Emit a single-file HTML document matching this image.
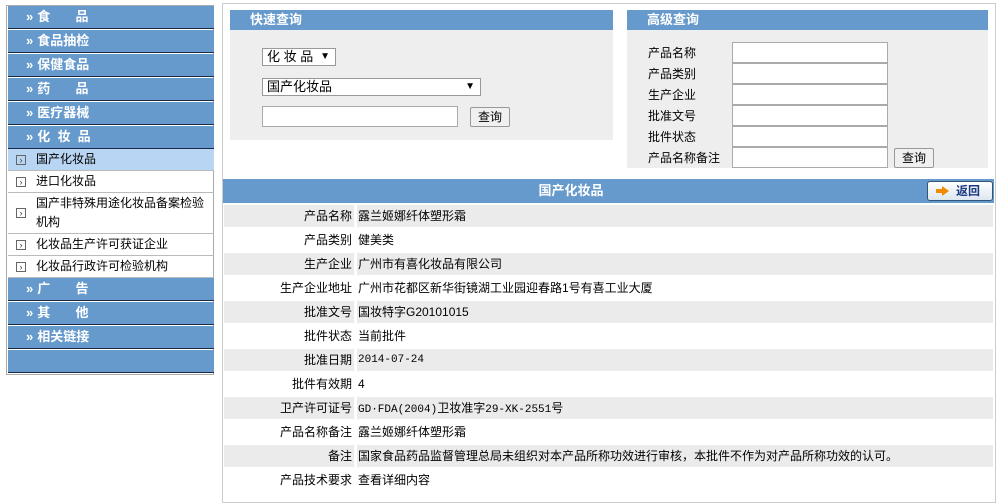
<!DOCTYPE html>
<html><head><meta charset="utf-8"><style>
*{margin:0;padding:0;box-sizing:border-box}
body{width:998px;height:498px;background:#fff;position:relative;overflow:hidden;font-family:"Liberation Sans","Noto Sans CJK SC",sans-serif;font-size:12px;color:#000}
.a{position:absolute}
.menu{left:6px;top:5px;width:208px;height:370px;border:1px solid #aaa;background:#fff}
.h{position:absolute;left:1px;width:206px;height:23px;background:#6699cc;border-bottom:1px solid #1a2a44;color:#fff;font-weight:bold;font-size:13px;line-height:22px;padding-left:18px}
.h.x:before{content:"»";margin-right:4px}
.it{position:absolute;left:1px;width:206px;border-bottom:1px solid #bbb;line-height:21px;padding-left:28px;font-size:12px}
.it i{position:absolute;left:8px;top:50%;margin-top:-5px;width:10px;height:10px;border:1px solid #666;font-style:normal;font-size:9px;line-height:8px;text-align:center;color:#444}
.ph{background:#6699cc;color:#fff;font-weight:bold;font-size:13px;line-height:20px;height:20px;padding-left:20px}
.pb{background:#eeeeee}
.sel{position:absolute;background:#fff;border:1px solid #999;height:18px;line-height:16px;padding-left:4px;font-size:13px}
.sel b{position:absolute;right:5px;top:0;font-size:10px}
.inp{position:absolute;background:#fff;border:1px solid #aaa}
.btn{position:absolute;background:#f0f0f0;border:1px solid #999;border-radius:2px;text-align:center;line-height:18px;font-size:12px}
.lbl{position:absolute;left:648px;font-size:12px}
.row{position:absolute;left:224px;width:769px;height:22px;line-height:22px}
.row .l{position:absolute;left:0;width:130px;height:22px;text-align:right;padding-right:2px}
.row .v{position:absolute;left:133px;right:0;height:22px;padding-left:1px}
.g .l,.g .v{background:#ebebeb}
</style></head><body>
<div class="a menu">
<div class="h x" style="top:0">食&nbsp;&nbsp;&nbsp;&nbsp;&nbsp;&nbsp;&nbsp;品</div>
<div class="h x" style="top:24px">食品抽检</div>
<div class="h x" style="top:48px">保健食品</div>
<div class="h x" style="top:72px">药&nbsp;&nbsp;&nbsp;&nbsp;&nbsp;&nbsp;&nbsp;品</div>
<div class="h x" style="top:96px">医疗器械</div>
<div class="h x" style="top:120px">化&nbsp;&nbsp;妆&nbsp;&nbsp;品</div>
<div class="it" style="top:143px;height:22px;background:#b8d6f4"><i>›</i>国产化妆品</div>
<div class="it" style="top:165px;height:22px"><i>›</i>进口化妆品</div>
<div class="it" style="top:187px;height:41px;line-height:19px;padding-top:1px"><i>›</i>国产非特殊用途化妆品备案检验机构</div>
<div class="it" style="top:228px;height:22px"><i>›</i>化妆品生产许可获证企业</div>
<div class="it" style="top:250px;height:22px"><i>›</i>化妆品行政许可检验机构</div>
<div class="h x" style="top:272px">广&nbsp;&nbsp;&nbsp;&nbsp;&nbsp;&nbsp;&nbsp;告</div>
<div class="h x" style="top:296px">其&nbsp;&nbsp;&nbsp;&nbsp;&nbsp;&nbsp;&nbsp;他</div>
<div class="h x" style="top:320px">相关链接</div>
<div class="h" style="top:344px;padding:0"></div>
</div>
<div class="a" style="left:222px;top:3px;width:774px;height:500px;border:1px solid #ccc"></div>
<div class="a" style="left:230px;top:10px;width:383px">
<div class="ph">快速查询</div>
<div class="pb" style="height:110px;position:relative">
<div class="sel" style="left:32px;top:18px;width:74px">化 妆 品<b>▼</b></div>
<div class="sel" style="left:32px;top:48px;width:219px">国产化妆品<b>▼</b></div>
<div class="inp" style="left:32px;top:76px;width:196px;height:21px"></div>
<div class="btn" style="left:240px;top:77px;width:40px;height:20px">查询</div>
</div></div>
<div class="a" style="left:627px;top:10px;width:361px">
<div class="ph">高级查询</div>
<div class="pb" style="height:138px"></div>
</div>
<div class="lbl" style="top:44px">产品名称</div>
<div class="lbl" style="top:65px">产品类别</div>
<div class="lbl" style="top:86px">生产企业</div>
<div class="lbl" style="top:107px">批准文号</div>
<div class="lbl" style="top:128px">批件状态</div>
<div class="lbl" style="top:149px">产品名称备注</div>
<div class="inp" style="left:732px;top:42px;width:156px;height:21px"></div>
<div class="inp" style="left:732px;top:63px;width:156px;height:21px"></div>
<div class="inp" style="left:732px;top:84px;width:156px;height:21px"></div>
<div class="inp" style="left:732px;top:105px;width:156px;height:21px"></div>
<div class="inp" style="left:732px;top:126px;width:156px;height:21px"></div>
<div class="inp" style="left:732px;top:147px;width:156px;height:21px"></div>
<div class="btn" style="left:894px;top:148px;width:40px;height:20px">查询</div>
<div class="a" style="left:223px;top:179px;width:771px;height:24px;background:#6699cc"></div>
<div class="a" style="left:223px;top:179px;width:696px;height:24px;color:#fff;font-weight:bold;font-size:13px;line-height:24px;text-align:center">国产化妆品</div>
<div class="a" style="left:927px;top:181px;width:66px;height:20px;border:1px solid #335577;border-radius:3px;background:linear-gradient(#fff,#dde6ef);font-weight:bold;color:#1a3a80;font-size:12px;line-height:18px;padding-left:28px">返回<span style="position:absolute;left:8px;top:4px;width:0;height:0;border-left:7px solid #f08a00;border-top:5px solid transparent;border-bottom:5px solid transparent;margin-left:6px"></span><span style="position:absolute;left:8px;top:7px;width:7px;height:4px;background:#f08a00"></span></div>
<div class="row g" style="top:205px"><div class="l">产品名称</div><div class="v">露兰姬娜纤体塑形霜</div></div>
<div class="row" style="top:229px"><div class="l">产品类别</div><div class="v">健美类</div></div>
<div class="row g" style="top:253px"><div class="l">生产企业</div><div class="v">广州市有喜化妆品有限公司</div></div>
<div class="row" style="top:277px"><div class="l">生产企业地址</div><div class="v">广州市花都区新华街镜湖工业园迎春路1号有喜工业大厦</div></div>
<div class="row g" style="top:301px"><div class="l">批准文号</div><div class="v">国妆特字G20101015</div></div>
<div class="row" style="top:325px"><div class="l">批件状态</div><div class="v">当前批件</div></div>
<div class="row g" style="top:349px"><div class="l">批准日期</div><div class="v" style="font-family:'Liberation Mono',monospace;font-size:11px">2014-07-24</div></div>
<div class="row" style="top:373px"><div class="l">批件有效期</div><div class="v">4</div></div>
<div class="row g" style="top:397px"><div class="l">卫产许可证号</div><div class="v"><span style="font-family:'Liberation Mono',monospace;font-size:11px">GD·FDA(2004)</span>卫妆准字<span style="font-family:'Liberation Mono',monospace;font-size:11px">29-XK-2551</span>号</div></div>
<div class="row" style="top:421px"><div class="l">产品名称备注</div><div class="v">露兰姬娜纤体塑形霜</div></div>
<div class="row g" style="top:445px"><div class="l">备注</div><div class="v">国家食品药品监督管理总局未组织对本产品所称功效进行审核，本批件不作为对产品所称功效的认可。</div></div>
<div class="row" style="top:469px"><div class="l">产品技术要求</div><div class="v">查看详细内容</div></div>
</body></html>
